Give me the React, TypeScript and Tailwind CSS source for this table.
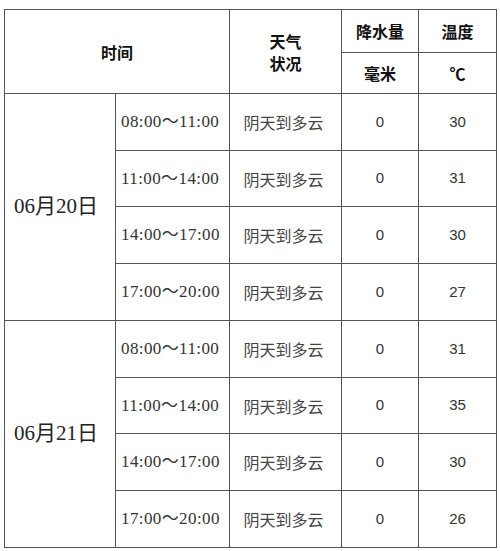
const CJK = "font-['Noto_Sans_CJK_SC',sans-serif]";
const SERIF = "font-['Liberation_Serif','Noto_Sans_CJK_SC',serif]";
const NUM = "font-['Liberation_Sans','Noto_Sans_CJK_SC',sans-serif]";

const SLOTS = ['08:00～11:00', '11:00～14:00', '14:00～17:00', '17:00～20:00'];

const DAYS = [
  { date: '06月20日', temps: ['30', '31', '30', '27'], heights: [57, 56, 57, 57] },
  { date: '06月21日', temps: ['31', '35', '30', '26'], heights: [57, 56, 57, 57] },
];

const cell = 'border border-[#555] text-center align-middle p-0';

export default function App() {
  return (
    <div className="w-[500px] h-[551px] bg-white pt-[9px] pl-[4px]">
      <table className="w-[492px] table-fixed border-collapse">
        <colgroup>
          <col className="w-[111px]" />
          <col className="w-[114px]" />
          <col className="w-[112px]" />
          <col className="w-[77px]" />
          <col className="w-[78px]" />
        </colgroup>
        <thead>
          <tr className="h-[43px]">
            <th colSpan={2} rowSpan={2} className={`${cell} ${CJK} text-[16px] font-bold text-[#111]`}>
              时间
            </th>
            <th rowSpan={2} className={`${cell} ${CJK} text-[16px] font-bold text-[#111] leading-[22px]`}>
              天气
              <br />
              状况
            </th>
            <th className={`${cell} ${CJK} text-[16px] font-bold text-[#111]`}>降水量</th>
            <th className={`${cell} ${CJK} text-[16px] font-bold text-[#111]`}>温度</th>
          </tr>
          <tr className="h-[41px]">
            <th className={`${cell} ${CJK} text-[16px] font-bold text-[#111]`}>毫米</th>
            <th className={`${cell} ${CJK} text-[16px] font-bold text-[#111]`}>℃</th>
          </tr>
        </thead>
        <tbody>
          {DAYS.map((d) =>
            SLOTS.map((slot, i) => (
              <tr key={d.date + slot} style={{ height: d.heights[i] }}>
                {i === 0 && (
                  <td rowSpan={4} className={`${cell} ${SERIF} text-[21px] text-[#222] text-left pl-[9px]`}>
                    {d.date}
                  </td>
                )}
                <td className={`${cell} ${SERIF} text-[17px] text-[#333] text-left pl-[5px] tracking-[0.4px]`}>
                  {slot}
                </td>
                <td className={`${cell} ${CJK} text-[16px] text-[#444] pr-[4px]`}>阴天到多云</td>
                <td className={`${cell} ${NUM} text-[15px] text-[#333]`}>0</td>
                <td className={`${cell} ${NUM} text-[15px] text-[#333]`}>{d.temps[i]}</td>
              </tr>
            )),
          )}
        </tbody>
      </table>
    </div>
  );
}
